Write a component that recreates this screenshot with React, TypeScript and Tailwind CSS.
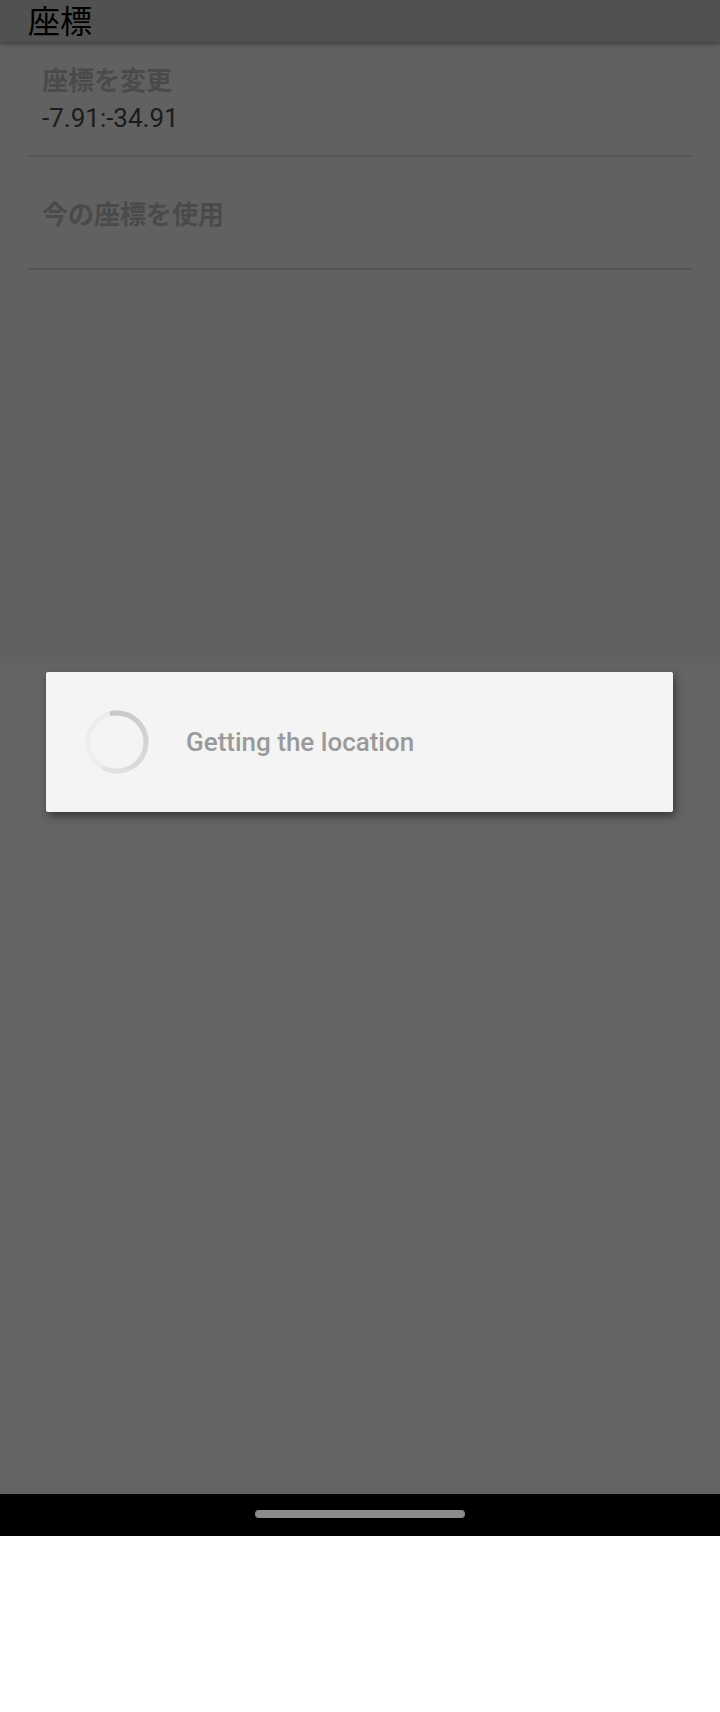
import React from "react";

const jp = { fontFamily: '"Noto Sans CJK JP", Roboto, sans-serif' };
const ro = { fontFamily: 'Roboto, "Noto Sans CJK JP", sans-serif' };

const polar = (cx: number, cy: number, r: number, deg: number) => {
  const a = ((deg - 90) * Math.PI) / 180;
  return [cx + r * Math.cos(a), cy + r * Math.sin(a)];
};

const arc = (from: number, to: number) => {
  const [x1, y1] = polar(32, 32, 29, from);
  const [x2, y2] = polar(32, 32, 29, to);
  return `M ${x1} ${y1} A 29 29 0 0 1 ${x2} ${y2}`;
};

// faded spinner: darker arc from just left of the top, fading clockwise
const Spinner = () => {
  const segs = [];
  const start = -14;
  const end = 210;
  const step = 8;
  for (let a = start; a < end; a += step) {
    const t = (a - start) / (end - start);
    const v = Math.round(0xc6 + t * (0xe4 - 0xc6));
    segs.push(
      <path
        key={a}
        d={arc(a, Math.min(a + step + 0.6, end))}
        stroke={`rgb(${v},${v},${v})`}
        strokeWidth={5}
        fill="none"
      />
    );
  }
  return (
    <svg width="64" height="64" viewBox="0 0 64 64" className="shrink-0">
      <circle cx="32" cy="32" r="29" stroke="#ededed" strokeWidth="5" fill="none" />
      {segs}
    </svg>
  );
};

export default function App() {
  return (
    <div className="flex flex-col w-full h-[1712px] bg-white">
      <div className="relative flex flex-col h-[1494px] bg-[#646464]">
        <div className="h-[43px] bg-[#515151] border-b border-[#474747] shadow-[0_2px_3px_rgba(0,0,0,0.25)] px-[28px] z-10 flex items-start">
          <span className="text-[32px] leading-[38px] text-black" style={jp}>
            座標
          </span>
        </div>

        <div className="flex flex-col h-[620px] bg-[#616161] px-[28px]">
          <div className="flex flex-col pl-[14px] pt-[21px] pb-[22px] border-b-2 border-[#555555]">
            <span className="text-[26px] leading-[30px] font-bold text-[#4a4a4a]" style={jp}>
              座標を変更
            </span>
            <span className="mt-[9px] text-[26px] leading-[30px] text-[#1c1c1c]" style={ro}>
              -7.91:-34.91
            </span>
          </div>
          <div className="flex flex-col pl-[14px] pt-[41px] pb-[40px] border-b-2 border-[#555555]">
            <span className="text-[26px] leading-[30px] font-bold text-[#4a4a4a]" style={jp}>
              今の座標を使用
            </span>
          </div>
        </div>

        <div className="absolute left-[46px] top-[672px] w-[627px] h-[140px] bg-[#f4f4f4] rounded-[2px] shadow-[2px_4px_8px_rgba(0,0,0,0.45)] flex items-center pl-[39px] gap-[37px]">
          <Spinner />
          <span className="text-[26px] font-medium text-[#9a9a9a]" style={ro}>
            Getting the location
          </span>
        </div>
      </div>

      <div className="h-[42px] bg-black flex justify-center pt-[16px]">
        <div className="w-[210px] h-[8px] rounded-full bg-[#8c8c8c]" />
      </div>
    </div>
  );
}
